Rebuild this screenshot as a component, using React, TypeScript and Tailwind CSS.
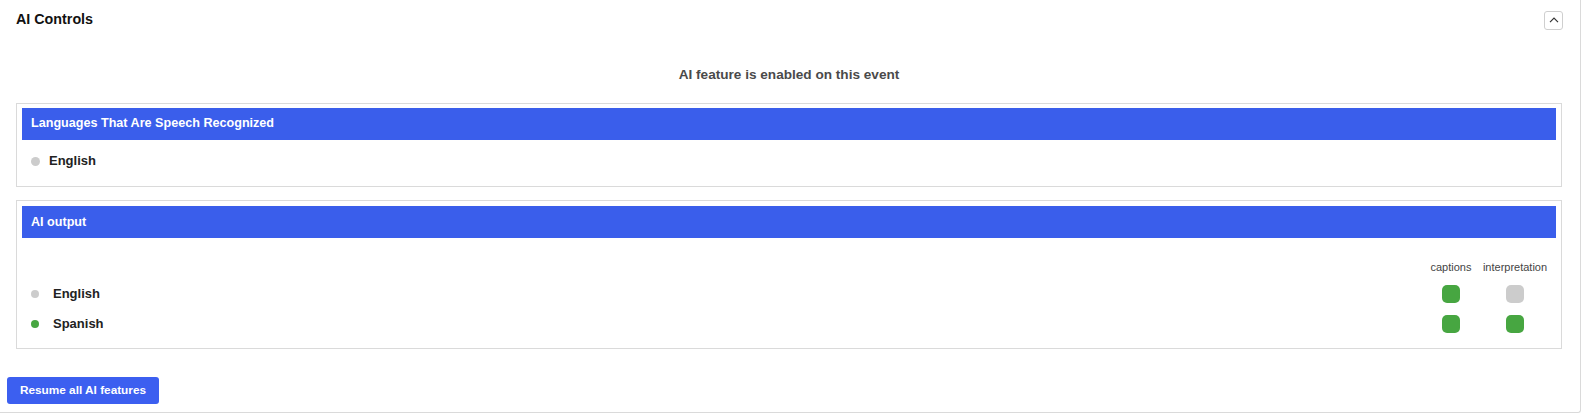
import React from "react";

const font = { fontFamily: '"Liberation Sans", Arial, sans-serif' };

function Row({ name, dot, cap, interp }: { name: string; dot: string; cap: boolean; interp: boolean }) {
  return (
    <div className="flex h-[30px] items-center">
      <div className="flex flex-1 items-center pl-[9px]">
        <span className="h-[8px] w-[8px] rounded-full" style={{ background: dot }} />
        <span className="ml-[14px] text-[13px] font-bold text-[#222]">{name}</span>
      </div>
      <div className="flex w-[52px] justify-center pr-[6px]">
        <span className={`h-[18px] w-[18px] rounded-[5px] ${cap ? "bg-[#47a641]" : "bg-[#cccccc]"}`} />
      </div>
      <div className="flex w-[70px] justify-center">
        <span className={`h-[18px] w-[18px] rounded-[5px] ${interp ? "bg-[#47a641]" : "bg-[#cccccc]"}`} />
      </div>
      <div className="w-[6px]" />
    </div>
  );
}

export default function App() {
  return (
    <div className="w-[1587px] h-[420px] bg-white" style={font}>
      <div className="w-[1581px] h-[413px] border-r border-b border-[#dadada] rounded-br-[3px] pl-[16px] pr-[18px]">
        <div className="flex h-[40px] items-center justify-between">
          <span className="text-[14.3px] font-bold text-[#111]">AI Controls</span>
          <button className="mr-[-1px] flex h-[19px] w-[19px] items-center justify-center rounded-[3px] border border-[#cfcfcf] bg-white">
            <svg width="10" height="6" viewBox="0 0 10 6">
              <path d="M1 5.2 L5 1.2 L9 5.2" fill="none" stroke="#333" strokeWidth="1.2" />
            </svg>
          </button>
        </div>
        <div className="flex h-[63px] items-center justify-center pb-[0px] pt-[8px]">
          <span className="text-[13.6px] font-bold text-[#4a4a4a]">AI feature is enabled on this event</span>
        </div>
        <div className="border border-[#dadada] px-[5px] pt-[4px]">
          <div className="flex h-[32px] items-center bg-[#3a5eeb] pb-[1px] pl-[9px] text-[12.6px] font-bold text-white">
            Languages That Are Speech Recognized
          </div>
          <div className="flex h-[46px] items-center pb-[4px] pl-[9px]">
            <span className="h-[9px] w-[9px] rounded-full bg-[#cccccc]" />
            <span className="ml-[9px] text-[13px] font-bold text-[#222]">English</span>
          </div>
        </div>
        <div className="mt-[13px] border border-[#dadada] px-[5px] pt-[5px]">
          <div className="flex h-[32px] items-center bg-[#3a5eeb] pl-[9px] text-[12.6px] font-bold text-white">
            AI output
          </div>
          <div className="flex h-[41px] items-end pb-[4px]">
            <div className="flex-1" />
            <div className="flex w-[52px] justify-center pr-[6px] text-[11px] text-[#444]">captions</div>
            <div className="flex w-[70px] justify-center text-[11px] text-[#444]">interpretation</div>
            <div className="w-[6px]" />
          </div>
          <Row name="English" dot="#cccccc" cap={true} interp={false} />
          <Row name="Spanish" dot="#47a641" cap={true} interp={true} />
          <div className="h-[9px]" />
        </div>
        <div className="mt-[28px] ml-[-9px]">
          <button className="h-[27px] w-[152px] rounded-[3px] bg-[#3c5ff0] text-[11.8px] font-bold text-white">
            Resume all AI features
          </button>
        </div>
      </div>
    </div>
  );
}
